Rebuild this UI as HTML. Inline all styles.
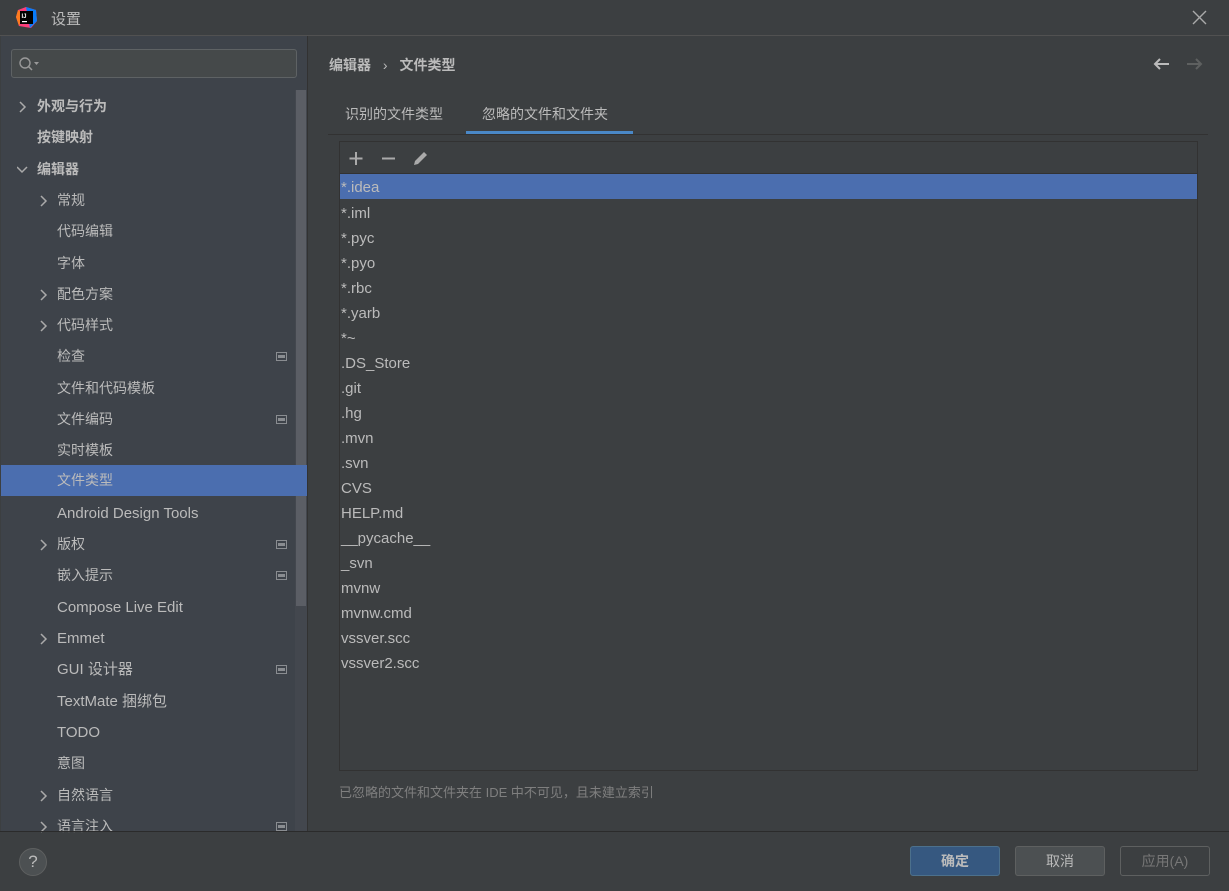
<!DOCTYPE html>
<html><head><meta charset="utf-8"><style>
*{margin:0;padding:0;box-sizing:border-box}
body{width:1229px;height:891px;background:#3c3f41;font-family:"Liberation Sans","Noto Sans CJK SC",sans-serif;color:#bbbbbb;position:relative;overflow:hidden;font-size:14px}
.abs{position:absolute}
#title{left:0;top:0;width:1229px;height:36px;background:#3c3f41;border-bottom:1px solid #515151}
#side{left:1px;top:36px;width:306px;height:795px;background:#3e434a}
.it{position:absolute;left:0;width:295px;height:31px;line-height:31px;white-space:nowrap}
.sel{background:#4b6eaf;width:306px}
.chev{position:absolute;left:17px;top:10px;width:10px;height:12px}
.c2{left:38px}
.sq{position:absolute;left:275px;top:11px;width:11px;height:9px;border:1px solid #8a8d91}
.sq:after{content:"";position:absolute;left:1px;top:2px;width:7px;height:3px;background:#8a8d91}
.row{position:absolute;left:1px;width:857px;height:25px;line-height:25px;padding-left:1px;font-size:15px}
.btn{position:absolute;top:846px;width:90px;height:30px;border:1px solid #5e6060;border-radius:3px;background:#4c5052;text-align:center;line-height:28px}
</style></head><body>
<svg width="0" height="0" style="position:absolute"><defs><path id="r" d="M2 1l5 5-5 5" stroke="#aaa" stroke-width="1.5" fill="none"/><path id="d" d="M0 3l5 5 5-5" stroke="#aaa" stroke-width="1.5" fill="none"/></defs></svg>
<div id="title" class="abs">
 <svg class="abs" style="left:16px;top:7px" width="21" height="21" viewBox="0 0 21 21"><path d="M2 3 L10 0 L20 3 L21 14 L15 21 L3 19 L0 10Z" fill="#fc3d7a"/><path d="M10 0 L20 3 L21 14 L14 21Z" fill="#087cfa"/><path d="M0 10 L2 3 L8 6 L3 19Z" fill="#fe7b1f"/><rect x="4" y="4" width="13" height="13" fill="#000"/><text x="5.5" y="11" font-size="6" fill="#fff" font-family="Liberation Sans" font-weight="bold">IJ</text><rect x="6" y="14" width="5" height="1.2" fill="#fff"/></svg>
 <div class="abs" style="left:51px;top:8px;font-size:15px;color:#bbb">设置</div>
 <svg class="abs" style="left:1192px;top:10px" width="15" height="15"><path d="M1 1L14 14M14 1L1 14" stroke="#aaa" stroke-width="1.4"/></svg>
</div>
<div id="side" class="abs">
 <div class="abs" style="left:10px;top:13px;width:286px;height:29px;border:1px solid #5e6264;border-radius:3px;background:#45494a"></div>
 <svg class="abs" style="left:17px;top:20px" width="24" height="16"><circle cx="7" cy="7" r="5" stroke="#999" stroke-width="1.4" fill="none"/><path d="M10.5 10.5L14 14" stroke="#999" stroke-width="1.5"/><path d="M16 6h5l-2.5 3z" fill="#999"/></svg>
 <div class="abs" style="left:294px;top:54px;width:12px;height:741px;background:#43474e"></div>
 <div class="abs" style="left:295px;top:54px;width:10px;height:516px;background:#5b5e65"></div>
 <div style="position:absolute;left:0;top:55px;width:306px">
  <div class="it" style="top:0"><svg class="chev"><use href="#r"/></svg><span style="margin-left:36px;font-weight:bold">外观与行为</span></div>
  <div class="it" style="top:31px"><span style="margin-left:36px;font-weight:bold">按键映射</span></div>
  <div class="it" style="top:63px"><svg class="chev" style="left:16px;width:12px"><use href="#d"/></svg><span style="margin-left:36px;font-weight:bold">编辑器</span></div>
  <div class="it" style="top:94px"><svg class="chev c2"><use href="#r"/></svg><span style="margin-left:56px">常规</span></div>
  <div class="it" style="top:125px"><span style="margin-left:56px">代码编辑</span></div>
  <div class="it" style="top:157px"><span style="margin-left:56px">字体</span></div>
  <div class="it" style="top:188px"><svg class="chev c2"><use href="#r"/></svg><span style="margin-left:56px">配色方案</span></div>
  <div class="it" style="top:219px"><svg class="chev c2"><use href="#r"/></svg><span style="margin-left:56px">代码样式</span></div>
  <div class="it" style="top:250px"><span style="margin-left:56px">检查</span><span class="sq"></span></div>
  <div class="it" style="top:282px"><span style="margin-left:56px">文件和代码模板</span></div>
  <div class="it" style="top:313px"><span style="margin-left:56px">文件编码</span><span class="sq"></span></div>
  <div class="it" style="top:344px"><span style="margin-left:56px">实时模板</span></div>
  <div class="it sel" style="top:374px"><span style="margin-left:56px">文件类型</span></div>
  <div class="it" style="top:407px"><span style="margin-left:56px;font-size:15px">Android Design Tools</span></div>
  <div class="it" style="top:438px"><svg class="chev c2"><use href="#r"/></svg><span style="margin-left:56px">版权</span><span class="sq"></span></div>
  <div class="it" style="top:469px"><span style="margin-left:56px">嵌入提示</span><span class="sq"></span></div>
  <div class="it" style="top:501px"><span style="margin-left:56px;font-size:15px">Compose Live Edit</span></div>
  <div class="it" style="top:532px"><svg class="chev c2"><use href="#r"/></svg><span style="margin-left:56px;font-size:15px">Emmet</span></div>
  <div class="it" style="top:563px"><span style="margin-left:56px;font-size:15px">GUI 设计器</span><span class="sq"></span></div>
  <div class="it" style="top:595px"><span style="margin-left:56px;font-size:15px">TextMate 捆绑包</span></div>
  <div class="it" style="top:626px"><span style="margin-left:56px;font-size:15px">TODO</span></div>
  <div class="it" style="top:657px"><span style="margin-left:56px">意图</span></div>
  <div class="it" style="top:689px"><svg class="chev c2"><use href="#r"/></svg><span style="margin-left:56px">自然语言</span></div>
  <div class="it" style="top:720px"><svg class="chev c2"><use href="#r"/></svg><span style="margin-left:56px">语言注入</span><span class="sq"></span></div>
 </div>
</div>
<div class="abs" style="left:307px;top:36px;width:1px;height:795px;background:#323232"></div>
<div class="abs" style="left:329px;top:55px;font-weight:bold;color:#bbb">编辑器 <span style="font-weight:normal;margin:0 8px">›</span> 文件类型</div>
<svg class="abs" style="left:1152px;top:57px" width="18" height="14"><path d="M17 7H3M8 2L3 7l5 5" stroke="#bbb" stroke-width="2" fill="none"/></svg>
<svg class="abs" style="left:1186px;top:57px" width="18" height="14"><path d="M1 7h14M10 2l5 5-5 5" stroke="#5e6060" stroke-width="2" fill="none"/></svg>
<div class="abs" style="left:345px;top:104px">识别的文件类型</div>
<div class="abs" style="left:482px;top:104px">忽略的文件和文件夹</div>
<div class="abs" style="left:328px;top:134px;width:880px;height:1px;background:#323232"></div>
<div class="abs" style="left:466px;top:131px;width:167px;height:3px;background:#4a88c7"></div>
<div class="abs" style="left:339px;top:141px;width:859px;height:630px;border:1px solid #323232;background:#3c3f41">
 <svg class="abs" style="left:8px;top:8px" width="90" height="16"><path d="M8 2v13M1.5 8.5h13" stroke="#aaa" stroke-width="2"/><path d="M34 8.5h13" stroke="#aaa" stroke-width="2"/><path d="M66 15l1-4 9-9 3 3-9 9z" fill="#aaa"/></svg>
 <div class="abs" style="left:0;top:31px;width:857px;height:1px;background:#323232"></div>
 <div style="position:absolute;left:-1px;top:32px">
 <div class="row" style="top:0;background:#4b6eaf;line-height:27px">*.idea</div>
 <div style="position:absolute;top:2px;left:0">
 <div class="row" style="top:25px">*.iml</div>
 <div class="row" style="top:50px">*.pyc</div>
 <div class="row" style="top:75px">*.pyo</div>
 <div class="row" style="top:100px">*.rbc</div>
 <div class="row" style="top:125px">*.yarb</div>
 <div class="row" style="top:150px">*~</div>
 <div class="row" style="top:175px">.DS_Store</div>
 <div class="row" style="top:200px">.git</div>
 <div class="row" style="top:225px">.hg</div>
 <div class="row" style="top:250px">.mvn</div>
 <div class="row" style="top:275px">.svn</div>
 <div class="row" style="top:300px">CVS</div>
 <div class="row" style="top:325px">HELP.md</div>
 <div class="row" style="top:350px">__pycache__</div>
 <div class="row" style="top:375px">_svn</div>
 <div class="row" style="top:400px">mvnw</div>
 <div class="row" style="top:425px">mvnw.cmd</div>
 <div class="row" style="top:450px">vssver.scc</div>
 <div class="row" style="top:475px">vssver2.scc</div>
 </div>
 </div>
</div>
<div class="abs" style="left:339px;top:782px;font-size:13px;color:#7f7f7f">已忽略的文件和文件夹在 IDE 中不可见，且未建立索引</div>
<div class="abs" style="left:0;top:831px;width:1229px;height:1px;background:#2b2b2b"></div>
<div class="abs" style="left:19px;top:848px;width:28px;height:28px;border-radius:50%;background:#4c5052;border:1px solid #5e6060;text-align:center;line-height:26px;font-size:17px;color:#bbb">?</div>
<div class="btn" style="left:910px;background:#365880;border-color:#4c708c;font-weight:bold">确定</div>
<div class="btn" style="left:1015px">取消</div>
<div class="btn" style="left:1120px;background:#3c3f41;color:#777">应用(A)</div>
</body></html>
